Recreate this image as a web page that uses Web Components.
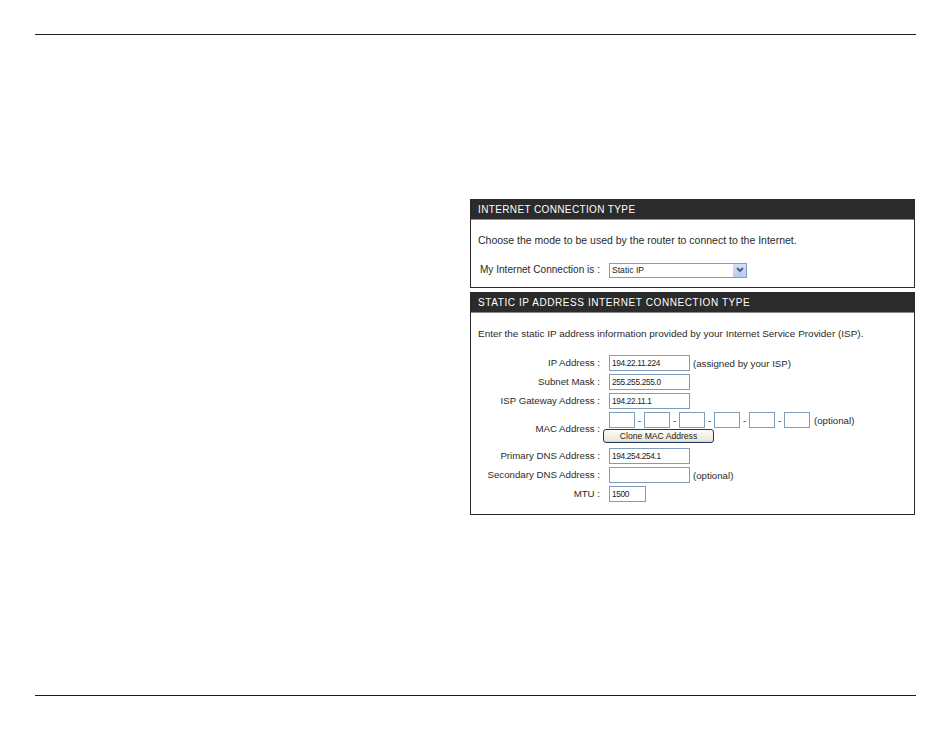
<!DOCTYPE html>
<html>
<head>
<meta charset="utf-8">
<title>Internet Connection</title>
<style>
  html, body { margin: 0; background: #fff; }
  body { width: 950px; height: 731px; overflow: hidden; font-family: "Liberation Sans", Arial, sans-serif; color: #2a2a2a; }
</style>
</head>
<body>
<manual-page>
  <wizard-panel heading="INTERNET CONNECTION TYPE" class="first">
    <p-line>Choose the mode to be used by the router to connect to the Internet.</p-line>
    <form-row label="My Internet Connection is :" style="--top:15px;--size:10.1px"><select-box value="Static IP"></select-box></form-row>
  </wizard-panel>
  <wizard-panel heading="STATIC IP ADDRESS INTERNET CONNECTION TYPE" class="second">
    <p-line style="--size:9.96px">Enter the static IP address information provided by your Internet Service Provider (ISP).</p-line>
    <form-row label="IP Address :" style="--top:15px"><text-box value="194.22.11.224"></text-box><span>(assigned by your ISP)</span></form-row>
    <form-row label="Subnet Mask :"><text-box value="255.255.255.0"></text-box></form-row>
    <form-row label="ISP Gateway Address :"><text-box value="194.22.11.1"></text-box></form-row>
    <mac-row></mac-row>
    <form-row label="Primary DNS Address :" style="--top:5px"><text-box value="194.254.254.1"></text-box></form-row>
    <form-row label="Secondary DNS Address :"><text-box></text-box><span>(optional)</span></form-row>
    <form-row label="MTU :"><text-box value="1500" size="short"></text-box></form-row>
  </wizard-panel>
</manual-page>

<script>
// Page frame: the two rules and the right hand column with the panels
class ManualPage extends HTMLElement {
  constructor() {
    super();
    this.attachShadow({mode: 'open'});
    this.shadowRoot.innerHTML = `
      <style>
        :host { display: flex; flex-direction: column; height: 731px; padding: 34px 34px 0 35px; box-sizing: border-box; }
        .rule { height: 1px; background: #1c1c1c; flex: none; }
        .col { flex: 1; display: flex; flex-direction: column; align-items: flex-end; gap: 4px; padding: 164px 1px 0 0; }
        .bottom { margin-bottom: 35px; }
      </style>
      <div class="rule"></div>
      <div class="col"><slot></slot></div>
      <div class="rule bottom"></div>`;
  }
}

class WizardPanel extends HTMLElement {
  constructor() {
    super();
    this.attachShadow({mode: 'open'});
    this.shadowRoot.innerHTML = `
      <style>
        :host { display: block; width: 445px; box-sizing: border-box; border: 1px solid #2a2a2a; background: #fff; }
        :host(.first) { height: 89px; --track: .37px; --head: 20px; }
        :host(.second) { height: 223px; --track: .58px; --head: 19px; }
        h2 { margin: 0; height: 19px; background: #2b2b2b; color: #fff; border-bottom: 1px solid #8a8a8a;
             font: normal 10px/var(--head) "Liberation Sans", sans-serif; letter-spacing: var(--track); padding-left: 7px; white-space: nowrap; }
        .body { padding-top: 14px; }
      </style>
      <h2></h2>
      <div class="body"><slot></slot></div>`;
    this.shadowRoot.querySelector('h2').textContent = this.getAttribute('heading');
  }
}

class PLine extends HTMLElement {
  constructor() {
    super();
    this.attachShadow({mode: 'open'});
    this.shadowRoot.innerHTML = `
      <style>:host { display: block; padding-left: 7px; font-size: var(--size, 10.5px); line-height: 13px; }</style>
      <slot></slot>`;
  }
}

// Label on the left, control on the right
class FormRow extends HTMLElement {
  constructor() {
    super();
    this.attachShadow({mode: 'open'});
    this.shadowRoot.innerHTML = `
      <style>
        :host { display: grid; grid-template-columns: 129px 1fr; column-gap: 9px; align-items: center; height: 16px;
                margin-top: var(--top, 3px); font-size: var(--size, 9.7px); }
        label { text-align: right; white-space: nowrap; padding-bottom: 1px; }
        .ctl { display: flex; align-items: center; gap: 3px; }
      </style>
      <label></label>
      <div class="ctl"><slot></slot></div>`;
    this.shadowRoot.querySelector('label').textContent = this.getAttribute('label');
  }
}

class TextBox extends HTMLElement {
  constructor() {
    super();
    this.attachShadow({mode: 'open'});
    this.shadowRoot.innerHTML = `
      <style>
        :host { display: block; flex: none; width: 81px; height: 16px; box-sizing: border-box; border: 1px solid #7f9db9;
                background: #fff; padding-left: 2px; font-size: 8.3px; line-height: 14px; letter-spacing: -.33px; color: #222; white-space: nowrap; }
        :host([size="short"]) { width: 37px; }
        :host([size="mac"]) { width: 26px; }
      </style>
      <span></span>`;
    this.shadowRoot.querySelector('span').textContent = this.getAttribute('value') || '';
  }
}

class SelectBox extends HTMLElement {
  constructor() {
    super();
    this.attachShadow({mode: 'open'});
    this.shadowRoot.innerHTML = `
      <style>
        :host { display: flex; width: 138px; height: 15px; box-sizing: border-box; border: 1px solid #7f9db9; background: #fff;
                justify-content: space-between; padding: 0 0 0 2px; font-size: 8.6px; line-height: 13px; color: #222; }
        .arrow { width: 13px; height: 13px; background: linear-gradient(#d5e0f8, #b9caf0); display: flex; align-items: center; justify-content: center; }
      </style>
      <span></span>
      <div class="arrow"><svg width="8" height="6" viewBox="0 0 8 6"><path d="M1 1l3 3 3-3" fill="none" stroke="#4d6185" stroke-width="2"/></svg></div>`;
    this.shadowRoot.querySelector('span').textContent = this.getAttribute('value');
  }
}

class PushButton extends HTMLElement {
  constructor() {
    super();
    this.attachShadow({mode: 'open'});
    this.shadowRoot.innerHTML = `
      <style>
        :host { display: block; width: 111px; height: 14px; box-sizing: border-box; border: 1px solid #1f3a66; border-radius: 3px;
                background: linear-gradient(#fbfbf8, #ece9d8 85%, #d6d0c0); text-align: center; font-size: 8.6px; line-height: 12px; color: #222; }
      </style>
      <slot></slot>`;
  }
}

// MAC row: six short boxes, then the clone button hanging under them
class MacRow extends HTMLElement {
  constructor() {
    super();
    this.attachShadow({mode: 'open'});
    let boxes = '';
    for (let i = 0; i < 6; i++) {
      boxes += '<text-box size="mac"></text-box>' + (i < 5 ? '<span>-</span>' : '');
    }
    this.shadowRoot.innerHTML = `
      <style>
        :host { display: grid; grid-template-columns: 129px 1fr; column-gap: 9px; align-items: center; height: 31px; margin-top: 3px; font-size: 9.7px; }
        label { text-align: right; white-space: nowrap; padding-top: 1px; }
        .boxes { display: flex; align-items: center; height: 16px; }
        .boxes span { width: 9px; text-align: center; }
        .boxes .opt { width: auto; margin-left: 4px; }
        push-button { margin: 1px 0 0 -6px; }
      </style>
      <label>MAC Address :</label>
      <div>
        <div class="boxes">${boxes}<span class="opt">(optional)</span></div>
        <push-button>Clone MAC Address</push-button>
      </div>`;
  }
}

window.customElements.define('manual-page', ManualPage);
window.customElements.define('wizard-panel', WizardPanel);
window.customElements.define('p-line', PLine);
window.customElements.define('form-row', FormRow);
window.customElements.define('text-box', TextBox);
window.customElements.define('select-box', SelectBox);
window.customElements.define('push-button', PushButton);
window.customElements.define('mac-row', MacRow);
</script>
</body>
</html>
